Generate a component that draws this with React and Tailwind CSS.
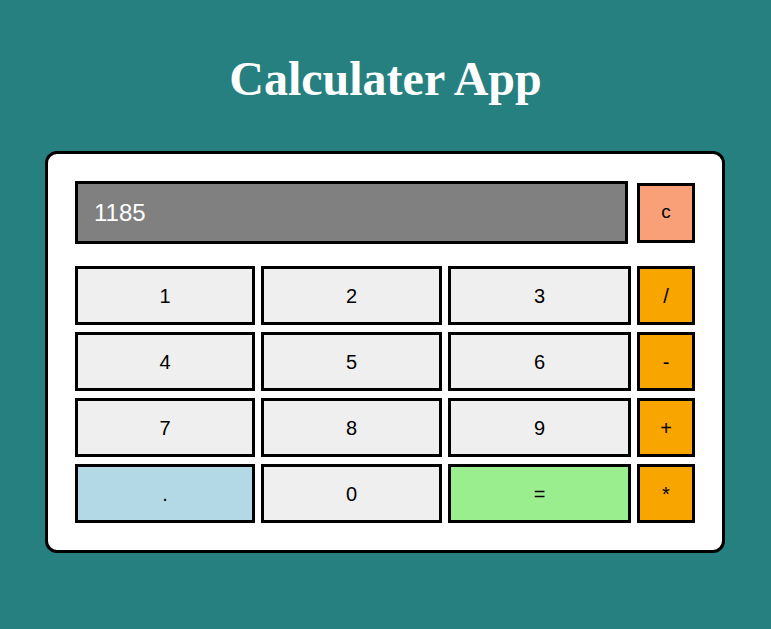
import { useState } from 'react'

const digitBtn = 'bg-[#efefef]'

function App() {
  const [value, setValue] = useState('1185')

  const press = (k) => {
    if (k === 'c') return setValue('')
    if (k === '=') {
      try {
        // eslint-disable-next-line no-eval
        setValue(String(eval(value)))
      } catch (e) {
        setValue('Error')
      }
      return
    }
    setValue(value + k)
  }

  const keys = [
    { k: '1', cls: digitBtn },
    { k: '2', cls: digitBtn },
    { k: '3', cls: digitBtn },
    { k: '/', cls: 'bg-[#f8a500]' },
    { k: '4', cls: digitBtn },
    { k: '5', cls: digitBtn },
    { k: '6', cls: digitBtn },
    { k: '-', cls: 'bg-[#f8a500]' },
    { k: '7', cls: digitBtn },
    { k: '8', cls: digitBtn },
    { k: '9', cls: digitBtn },
    { k: '+', cls: 'bg-[#f8a500]' },
    { k: '.', cls: 'bg-[#b3d8e6]' },
    { k: '0', cls: digitBtn },
    { k: '=', cls: 'bg-[#9bee8d]' },
    { k: '*', cls: 'bg-[#f8a500]' },
  ]

  return (
    <div className="min-h-screen bg-[#268080] pt-[51px] font-['Liberation_Sans',Arial,sans-serif]">
      {/* Title */}
      <h1 className="text-center text-white text-[48px] leading-[56px] font-bold font-['Liberation_Serif','Times_New_Roman',serif]">
        Calculater App
      </h1>

      {/* Calculator */}
      <div className="ml-[45px] mt-[44px] w-[680px] bg-white border-[3px] border-black rounded-[12px] p-[27px]">
        <div className="flex items-center gap-[9px]">
          <div className="w-[553px] h-[63px] bg-[#808080] border-[3px] border-black flex items-center px-4 text-white text-[24px]">
            {value}
          </div>
          <button
            onClick={() => press('c')}
            className="w-[58px] h-[60px] bg-[#f9a078] border-[3px] border-black text-[19px] text-black"
          >
            c
          </button>
        </div>

        <div className="mt-[22px] grid grid-cols-[180px_181px_183px_58px] gap-x-[6px] gap-y-[7px]">
          {keys.map(({ k, cls }) => (
            <button
              key={k}
              onClick={() => press(k)}
              className={`${cls} h-[59px] border-[3px] border-black text-[20px] text-black flex items-center justify-center`}
            >
              {k}
            </button>
          ))}
        </div>
      </div>
    </div>
  )
}

export default App
